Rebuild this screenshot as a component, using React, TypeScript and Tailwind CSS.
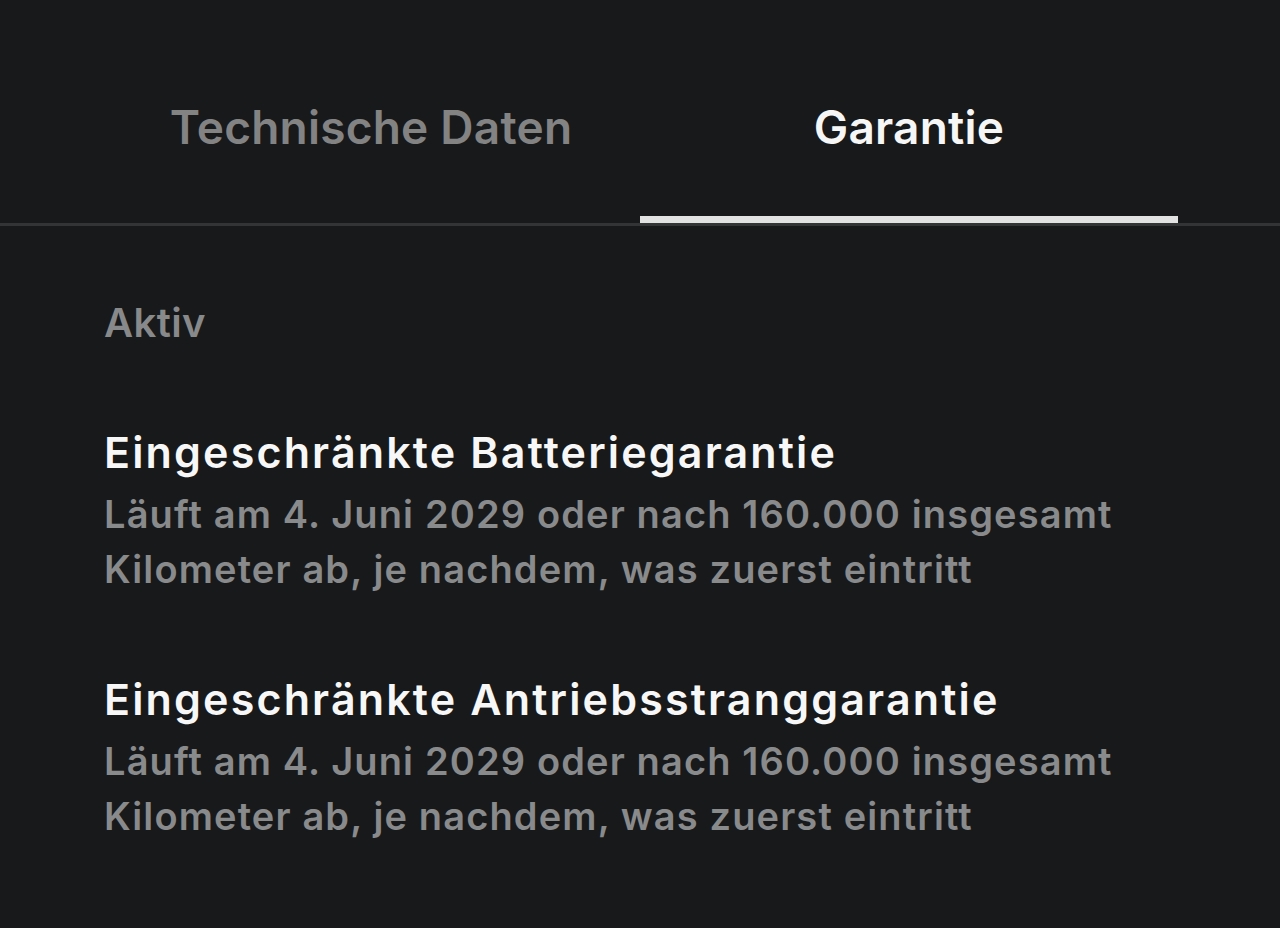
const font = { fontFamily: "Inter, 'Noto Sans', sans-serif" };

type Warranty = {
  title: string;
  detail: string;
};

const warranties: Warranty[] = [
  {
    title: "Eingeschränkte Batteriegarantie",
    detail: "Läuft am 4. Juni 2029 oder nach 160.000 insgesamt Kilometer ab, je nachdem, was zuerst eintritt",
  },
  {
    title: "Eingeschränkte Antriebsstranggarantie",
    detail: "Läuft am 4. Juni 2029 oder nach 160.000 insgesamt Kilometer ab, je nachdem, was zuerst eintritt",
  },
];

function Tab({ label, active }: { label: string; active: boolean }) {
  return (
    <button
      type="button"
      className="flex h-[223px] flex-col items-center pt-[99px]"
    >
      <span
        className={`text-[46px] leading-[56px] font-semibold tracking-[0.005em] ${
          active ? "text-[#f6f6f6]" : "text-[#838384]"
        }`}
      >
        {label}
      </span>
      <span
        className={`mt-auto block h-[7px] w-full ${active ? "bg-[#e2e2e3]" : "bg-transparent"}`}
      />
    </button>
  );
}

export default function App() {
  return (
    <div className="min-h-[928px] w-full bg-[#18191b]" style={font}>
      <div className="border-b-[3px] border-[#323436]">
        <div className="grid grid-cols-2 px-[102px]">
          <Tab label="Technische Daten" active={false} />
          <Tab label="Garantie" active={true} />
        </div>
      </div>

      <main className="px-[104px] pt-[73px]">
        <p className="text-[40px] leading-[48px] font-semibold tracking-[0.01em] text-[#88898a]">
          Aktiv
        </p>

        <ul className="mt-[81px] flex flex-col gap-[78px]">
          {warranties.map((w) => (
            <li key={w.title}>
              <h3 className="text-[43px] leading-[48px] font-semibold tracking-[0.05em] text-[#f7f7f7]">
                {w.title}
              </h3>
              <p className="mt-[11px] max-w-[1060px] text-[38px] leading-[55px] font-semibold tracking-[0.03em] text-[#898a8b]">
                {w.detail}
              </p>
            </li>
          ))}
        </ul>
      </main>
    </div>
  );
}
